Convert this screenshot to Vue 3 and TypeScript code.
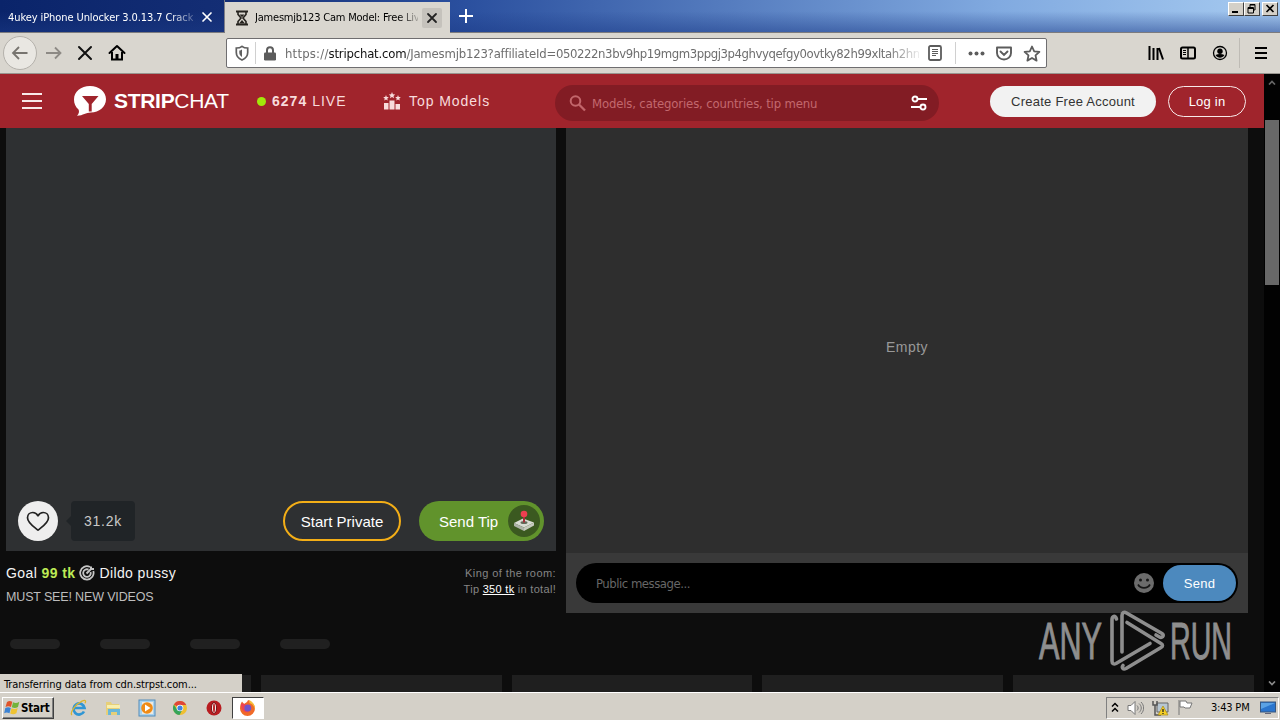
<script setup lang="ts">
const skeletonTabs = [0, 1, 2, 3]
const cards = [0, 1, 2, 3, 4]
</script>

<template>
  <div class="screen">
    <header class="tabs">
      <div class="tab idle">
        <span class="tab-title fade-blue">4ukey iPhone Unlocker 3.0.13.7 Crack</span>
        <svg class="tab-x" width="18" height="18" viewBox="0 0 18 18"><path d="M5 5l8 8M13 5l-8 8" stroke="#fff" stroke-width="1.7" stroke-linecap="round" /></svg>
      </div>
      <div class="tab active">
        <svg class="hourglass" width="14" height="16" viewBox="0 0 14 16" fill="none" stroke="#26231f">
          <path d="M1 1.5h12M1 14.5h12" stroke-width="2" />
          <path d="M3 2v2.500L6 8l-3 3.500V14M11 2v2.500L8 8l3 3.500V14" stroke-width="1.6" />
          <path d="M4.500 4.500h5L7 7.200zM4 13.500l3-3.500 3 3.500z" fill="#26231f" stroke="none" />
        </svg>
        <span class="tab-title fade-gray">Jamesmjb123 Cam Model: Free Liv</span>
        <svg class="tab-x boxed" width="20" height="20" viewBox="0 0 20 20"><path d="M6 6l8 8M14 6l-8 8" stroke="#222" stroke-width="1.8" stroke-linecap="round" /></svg>
      </div>
      <svg class="plus" width="16" height="16" viewBox="0 0 16 16"><path d="M8 1v14M1 8h14" stroke="#fff" stroke-width="2" /></svg>
      <div class="window-buttons">
        <i><svg width="14" height="12" viewBox="0 0 14 12"><path d="M3 9h6" stroke="#000" stroke-width="2" /></svg></i>
        <i><svg width="14" height="12" viewBox="0 0 14 12" fill="none" stroke="#000"><path d="M5 4V1.500h5V7H8.500M5 2h5" /><path d="M3 4.500h5.500V10H3zM3 5.500h5" /></svg></i>
        <i class="closer"><svg width="14" height="12" viewBox="0 0 14 12"><path d="M3.500 2l7 7M10.500 2l-7 7" stroke="#000" stroke-width="1.700" /></svg></i>
      </div>
    </header>

    <nav class="toolbar">
      <span class="back"><svg width="20" height="20" viewBox="0 0 20 20" fill="none" stroke="#77746f" stroke-width="1.800"><path d="M17.500 10H3M9 4l-6 6 6 6" /></svg></span>
      <svg class="forward" width="18" height="18" viewBox="0 0 18 18" fill="none" stroke="#8d8a85" stroke-width="1.800"><path d="M1 9h14M10 3.500l5.500 5.500-5.500 5.500" /></svg>
      <svg class="stop" width="16" height="16" viewBox="0 0 16 16"><path d="M2 2l12 12M14 2L2 14" stroke="#111" stroke-width="2" stroke-linecap="round" /></svg>
      <svg class="home" width="18" height="18" viewBox="0 0 18 18" fill="none" stroke="#000" stroke-width="2"><path d="M1.500 9L9 2l7.500 7" stroke-linecap="round" stroke-linejoin="round" /><path d="M4 8v7.500h10V8" /><path d="M9 15v-5" stroke-width="3" /></svg>
      <div class="address">
        <svg width="14" height="16" viewBox="0 0 14 16" fill="none"><path d="M1.300 3C4 3 5.500 2.500 7 1.300 8.500 2.500 10 3 12.700 3v4.500c0 3.500-2 6-5.700 7.500-3.700-1.500-5.700-4-5.700-7.500z" stroke="#5f5f5f" stroke-width="1.700" /><path d="M7 4.500v7.500c-1.800-1.200-2.700-2.500-2.700-4.500V5.500C5.500 5.500 6.300 5 7 4.500z" fill="#5f5f5f" /></svg>
        <i class="divider"></i>
        <svg width="12" height="15" viewBox="0 0 12 15"><path d="M3 7V4.200a3 3 0 016 0V7" fill="none" stroke="#5c5c5c" stroke-width="2" /><rect y="6.500" width="12" height="8" rx="1.200" fill="#5c5c5c" /></svg>
        <span class="url"><span class="scheme">https://</span><b>stripchat.com</b>/Jamesmjb123?affiliateId=<span class="token">050222n3bv9hp19mgm3ppgj3p4ghvyqefgy0ovtky82h99xltah2hn</span></span>
        <svg class="reader" width="14" height="16" viewBox="0 0 14 16" fill="none" stroke="#5c5c5c"><rect x="1" y="1" width="12" height="14" rx="1.500" stroke-width="1.800" /><path d="M4 4.500h6M4 6.500h6M4 8.500h6M4 10.500h4" /></svg>
        <i class="divider second"></i>
        <svg class="dots" width="17" height="5" viewBox="0 0 17 5" fill="#5c5c5c"><circle cx="2.500" cy="2.500" r="2" /><circle cx="8.500" cy="2.500" r="2" /><circle cx="14.500" cy="2.500" r="2" /></svg>
        <svg class="pocket" width="16" height="15" viewBox="0 0 16 15" fill="none" stroke="#5c5c5c" stroke-width="1.900"><path d="M1 1.500h14V7A7 6.500 0 011 7z" stroke-linejoin="round" /><path d="M4.500 5.500L8 9l3.500-3.500" stroke-linecap="round" /></svg>
        <svg class="star" width="18" height="17" viewBox="0 0 18 17" fill="none" stroke="#5c5c5c" stroke-width="1.800" stroke-linejoin="round"><path d="M9 1.500l2.200 4.800 5.200.6-3.900 3.500 1.100 5.200L9 13l-4.600 2.600 1.100-5.200-3.900-3.500 5.200-.6z" /></svg>
      </div>
      <div class="tools">
        <svg width="16" height="14" viewBox="0 0 16 14" stroke="#000" stroke-width="2"><path d="M1.500 0v14M5.500 2v12M9.500 2v12M11 2l4 11.500" /></svg>
        <svg width="16" height="14" viewBox="0 0 16 14" fill="none" stroke="#000"><rect x="1" y="1.500" width="14" height="11" rx="1.500" stroke-width="2" /><path d="M8 2v10" stroke-width="1.500" /><path d="M3 4.500h3M3 6.500h3M3 8.500h3" /></svg>
        <svg width="16" height="16" viewBox="0 0 16 16"><circle cx="8" cy="8" r="6.500" fill="none" stroke="#000" stroke-width="1.300" /><circle cx="8" cy="6.200" r="2.700" /><path d="M3.500 10c2.500-1.500 6.500-1.500 9 0-2.200 3.500-6.800 3.500-9 0z" /></svg>
        <i class="divider tall"></i>
        <svg width="14" height="14" viewBox="0 0 14 14" stroke="#000" stroke-width="2"><path d="M1 2h12M1 7h12M1 12h12" /></svg>
      </div>
    </nav>

    <div class="viewport">
      <main class="site">
        <header class="site-header">
          <svg class="burger" width="20" height="17" viewBox="0 0 20 17" stroke="#f8eaea" stroke-width="2"><path d="M0 1h20M0 8h20M0 15h20" /></svg>
          <svg class="bubble" width="34" height="32" viewBox="0 0 34 32"><path d="M17 1C26 1 33 6.500 33 14.200S26 27.500 18 27.500C12.500 27.500 10.500 30.500 4 30.800c2-2 2.500-4.500 1.500-6.300C2.500 22 1 18.500 1 14.500 1 6.500 8 1 17 1z" fill="#fff" /><path d="M9 11h16.500l-6.800 8v7.500h-2.900V19z" fill="#a0242c" /></svg>
          <span class="brand"><b>STRIP</b>CHAT</span>
          <i class="live-dot"></i>
          <span class="live"><b>6274</b> LIVE</span>
          <svg class="podium" width="18" height="18" viewBox="0 0 18 18" fill="#f8dcdc"><path d="M1 11h4.500v6.500H1zM6.500 8.500h5v9h-5zM12.500 12H17v5.500h-4.500z" /><path d="M9 0l.9 2.200 2.300.2-1.700 1.500.5 2.300L9 5 7 6.200l.5-2.300-1.700-1.500 2.300-.2zM3 3l.8 1.900 2 .2-1.500 1.300.4 2L3 7.400 1.300 8.400l.4-2L.2 5.100l2-.2zM15 3l.8 1.900 2 .2-1.500 1.300.4 2-1.700-1-1.700 1 .4-2-1.500-1.300 2-.2z" /></svg>
          <span class="top-models">Top Models</span>
          <div class="search">
            <svg width="17" height="17" viewBox="0 0 17 17" fill="none" stroke="#c2666b" stroke-width="2"><circle cx="6.500" cy="6" r="4.800" /><path d="M10 9.500l6 6" stroke-width="2.300" /></svg>
            <span>Models, categories, countries, tip menu</span>
            <svg class="filter" width="16" height="16" viewBox="0 0 16 16" fill="none" stroke="#fff" stroke-width="1.900"><circle cx="4" cy="4" r="2.500" /><path d="M7 4h9M0 12h9" /><circle cx="12" cy="12" r="2.500" /></svg>
          </div>
          <button class="create">Create Free Account</button>
          <button class="login">Log in</button>
        </header>

        <section class="room">
          <div class="left">
            <div class="video">
              <span class="like"><svg width="24" height="21" viewBox="0 0 24 21" fill="none" stroke="#222" stroke-width="1.700" stroke-linejoin="round"><path d="M12 19.200C8 16 1.500 12 1.500 6.800 1.500 3.500 4 1.500 6.800 1.500c2.200 0 4 1.200 5.200 3.300 1.200-2.100 3-3.300 5.200-3.300 2.800 0 5.300 2 5.300 5.300C22.500 12 16 16 12 19.200z" /></svg></span>
              <span class="likes">31.2k</span>
              <button class="private">Start Private</button>
              <button class="tip">
                <span>Send Tip</span>
                <i><svg width="22" height="22" viewBox="0 0 22 22"><path d="M1 13l9-4.500 11 4-10 5z" fill="#d9dcd4" /><path d="M1 13v3l10 5v-3.500z" fill="#aeb3a8" /><path d="M21 12.500v3L11 21v-3.500z" fill="#c6cabf" /><ellipse cx="11" cy="12.500" rx="3.500" ry="1.600" fill="#626c5b" /><path d="M11 5v7.500" stroke="#a6303b" stroke-width="2" /><circle cx="11" cy="4" r="3.300" fill="#ee3f50" /></svg></i>
              </button>
            </div>
            <div class="info">
              <div class="goal">
                <p class="goal-line">Goal <b>99 tk</b><svg width="16" height="16" viewBox="0 0 16 16" fill="none" stroke="#c6c6c6" stroke-width="1.800"><path d="M11 2A6.700 6.700 0 1014.300 6" /><path d="M9.500 4.600A3.800 3.800 0 1011.600 7" /><path d="M7.500 8.500l5-5M12 4V1.500M12 4h3" stroke-width="2" /></svg>Dildo pussy</p>
                <p class="topic">MUST SEE! NEW VIDEOS</p>
              </div>
              <div class="king"><p>King of the room:</p><p class="king-tip">Tip <u>350 tk</u> in total!</p></div>
            </div>
          </div>
          <div class="chat">
            <div class="messages">Empty</div>
            <div class="composer">
              <div class="message-box">
                <span>Public message...</span>
                <svg width="20" height="20" viewBox="0 0 20 20"><circle cx="10" cy="10" r="10" fill="#6c6c6c" /><circle cx="6.500" cy="7" r="1.500" fill="#171717" /><circle cx="13.500" cy="7" r="1.500" fill="#171717" /><path d="M4 11.500c2.500 4.500 9.500 4.500 12 0" fill="none" stroke="#171717" stroke-width="1.700" /></svg>
                <button>Send</button>
              </div>
            </div>
          </div>
        </section>
        <div class="skeletons"><i v-for="n in skeletonTabs" :key="n"></i></div>
        <div class="cards"><i v-for="n in cards" :key="n"></i></div>
      </main>
      <aside class="scrollbar">
        <svg width="8" height="5" viewBox="0 0 8 5"><path d="M1 4.500L4 1.500l3 3" fill="none" stroke="#666" stroke-width="1.700" /></svg>
        <i></i>
        <svg class="down" width="8" height="5" viewBox="0 0 8 5"><path d="M1 .5L4 3.500l3-3" fill="none" stroke="#888" stroke-width="1.700" /></svg>
      </aside>
      <div class="status">Transferring data from cdn.strpst.com...</div>
      <svg class="watermark" width="200" height="64" viewBox="0 0 200 64">
        <text x="1" y="50" textLength="63" lengthAdjust="spacingAndGlyphs">ANY</text>
        <g fill="none" stroke="#8e8e8e" stroke-width="3.600" stroke-linejoin="round" stroke-linecap="round">
          <path d="M78.500 10c-1.500-4-4.500-3-4.500 1v41c0 3 2 3.500 4 2.500l34-20" />
          <path d="M84 43V6.500c0-3 2-4 4.500-2.500L124 24.500c3 2 0 5-3 3.200L118 26" />
          <path d="M89 13.500L123 34.500c2 1.200 2 2.800 0 4L88 59.500c-3 1.500-4.500-1-3-3" />
        </g>
        <text x="132" y="50" textLength="62" lengthAdjust="spacingAndGlyphs">RUN</text>
      </svg>
    </div>

    <footer class="taskbar">
      <div class="start">
        <svg width="16" height="16" viewBox="0 0 16 16"><path d="M3 2c2-1.500 3.500-1.200 5.300-.2L7 7C5 6 3.500 6 1.500 7z" fill="#df542b" /><path d="M9 2.200c2 1 4 1 6.300-.5L14 7c-2 1.200-4 1.200-6.200.3z" fill="#73b33b" /><path d="M1.300 8c2-1 3.700-1 5.500 0l-1.300 5.200c-2-1-3.500-1-5.300 0z" fill="#3c83d4" /><path d="M7.500 8.300c2.200 1 4 1 6.200-.2l-1.300 5.200c-2.200 1.200-4 1.200-6.200.2z" fill="#efc332" /></svg>
        <b>Start</b>
      </div>
      <div class="launchers">
        <span><svg width="18" height="18" viewBox="0 0 18 18" fill="none"><path d="M14 12.500a5.500 5.500 0 11.500-3.500H4" stroke="#3096d4" stroke-width="2.700" /><path d="M2 16C-.5 14 5 5.500 12 2.200c4-1.800 4 .2 3 2" stroke="#dcb52e" stroke-width="1.300" /></svg></span>
        <span><svg width="18" height="18" viewBox="0 0 18 18"><path d="M2 3h5l1 2h7v11H2z" fill="#e6cf79" /><path d="M3 6h13v3H3z" fill="#f8efae" /><path d="M4 10h12v6h-3v-3H7v3H4z" fill="#69b7d9" /></svg></span>
        <span><svg width="18" height="18" viewBox="0 0 18 18"><rect x="1" y="1" width="16" height="16" fill="#a8d2ee" stroke="#528bba" /><rect x="4" y="3" width="11" height="12" fill="#eee9df" /><circle cx="9" cy="9" r="5.800" fill="#f08b16" /><path d="M7 5.500v7L12.500 9z" fill="#fff" /></svg></span>
        <span><svg width="16" height="16" viewBox="0 0 16 16"><circle cx="8" cy="8" r="7" fill="#efbf32" /><path d="M8 8L1.900 4.500A7 7 0 0114.200 5H8z" fill="#df4638" /><path d="M1.900 4.500A7 7 0 007.500 15l3-5.500L8 11 5 9.500z" fill="#35a45a" /><circle cx="8" cy="8" r="3.300" fill="#fff" /><circle cx="8" cy="8" r="2.600" fill="#4083df" /></svg></span>
        <span><svg width="16" height="16" viewBox="0 0 16 16"><circle cx="8" cy="8" r="7.500" fill="#b81c20" /><ellipse cx="8" cy="8" rx="2.600" ry="5.500" fill="#f7e9e7" stroke="#741114" /><ellipse cx="8" cy="8" rx="1" ry="4.800" fill="#bc2427" /></svg></span>
        <span class="current"><svg width="17" height="17" viewBox="0 0 17 17"><path d="M9 1c3 1 7 4 7 8.500a7.500 7.500 0 01-15 0C1 6 2 4 3 2.500L5 5c1-1 3-1 4-4z" fill="#f06a28" /><path d="M10 1c4 2 7 6 5.500 10 0-4-2-6-5-7z" fill="#f6c138" /><path d="M2 5c2-1 5 0 6 2L5 8c0 3 3 5 6 4-3 3-9 1-9-7z" fill="#ee4355" /><circle cx="8.800" cy="9" r="3.500" fill="#7254ca" /></svg></span>
      </div>
      <div class="tray">
        <svg width="8" height="11" viewBox="0 0 8 11" fill="none" stroke="#000" stroke-width="1.500"><path d="M1 4.500l3-3 3 3M1 9.500l3-3 3 3" /></svg>
        <svg width="17" height="16" viewBox="0 0 17 16" fill="#fff" stroke="#777"><path d="M1 5.500h3l4-4v13l-4-4H1z" /><path d="M10 5.500c1.500 1.500 1.500 3.500 0 5M12 3.500c3 2.500 3 6.500 0 9M14 2c3.500 3.500 3.500 8.500 0 12" fill="none" /></svg>
        <svg width="17" height="16" viewBox="0 0 17 16"><path d="M5 3h11v9H5z" fill="#b7c6d2" stroke="#666" /><path d="M1 1v4h4V1M3 5v10h6" fill="none" stroke="#555" stroke-width="1.500" /><path d="M11 6l5 9H6z" fill="#f5cf25" stroke="#a88a17" stroke-width=".7" /><path d="M11 9v3M11 13v1" stroke="#222" stroke-width="1.300" /></svg>
        <svg width="17" height="17" viewBox="0 0 17 17" fill="#fff" stroke="#777"><path d="M2 1v15M3 2h6l1 2h5l-2 5H8L7 8H3z" /></svg>
        <time>3:43 PM</time>
        <svg width="16" height="15" viewBox="0 0 16 15"><rect x=".5" y="2" width="15" height="10" fill="#2a75cd" stroke="#36567f" /><path d="M1 3h14L1 9z" fill="#5aa2e5" /><path d="M5 13h6v1H5z" fill="#667" /></svg>
      </div>
    </footer>
  </div>
</template>

<style>
html, body { overflow: hidden; background: #0d0d0d; }
</style>

<style scoped>
* { box-sizing: border-box; }
svg { display: block; flex: none; }
p { margin: 0; white-space: nowrap; }
button { padding: 0; border: 0; font: inherit; white-space: nowrap; }
.screen { width: 1280px; height: 720px; display: flex; flex-direction: column; overflow: hidden; font-family: "DejaVu Sans Condensed", "DejaVu Sans", sans-serif; font-size: 11px; font-stretch: condensed; }

.tabs { height: 33px; flex: none; display: flex; background: linear-gradient(180deg, transparent 35%, #1c3b8780), linear-gradient(90deg, #0a246a, #142e75 18%, #2a4f9e 36%, #81aae0 78%, #a6caf0); border-bottom: 1px solid #7c7b7e; }
.tab { display: flex; align-items: center; width: 225px; height: 33px; border-right: 1px solid #7e7f88; }
.idle { padding: 0 8px; color: #fff; height: 32px; padding-top: 2px; }
.tab-title { width: 185px; overflow: hidden; white-space: nowrap; letter-spacing: -0.08px; }
.fade-blue { -webkit-mask-image: linear-gradient(90deg, #000 88%, #0004); mask-image: linear-gradient(90deg, #000 88%, #0004); }
.tab-x { margin-left: 5px; }
.active { margin-top: 2px; height: 31px; padding-left: 10px; background: #d9d6cf; border-right: 0; }
.hourglass { margin-right: 6px; }
.fade-gray { width: 163px; letter-spacing: -.2px; -webkit-mask-image: linear-gradient(90deg, #000 88%, #0003); mask-image: linear-gradient(90deg, #000 88%, #0003); }
.boxed { margin-left: 4px; background: #c5c2bc; border-radius: 2px; }
.plus { margin: 8px 0 0 8px; }
.window-buttons { margin-left: auto; display: flex; padding: 2px 2px 0 0; }
.window-buttons i { width: 16px; height: 14px; background: #d4d0c8; border: 1px solid; border-color: #fff #404040 #404040 #fff; }
.window-buttons .closer { margin-left: 2px; }

.toolbar { height: 41px; flex: none; display: flex; align-items: center; background: #d9d6cf; border-bottom: 1px solid #98958f; padding-left: 3px; }
.back { width: 34px; height: 34px; border: 1px solid #b4b1ab; border-radius: 50%; background: #e9e7e2; display: grid; place-items: center; }
.forward { margin-left: 8px; }
.stop { margin-left: 14px; }
.home { margin-left: 15px; }
.address { flex: none; width: 821px; height: 30px; margin-left: 100px; padding-left: 8px; display: flex; align-items: center; background: #fff; border: 1px solid #6f6e70; border-radius: 2px; }
.divider { flex: none; width: 1px; height: 22px; background: #d0d0d0; margin: 0 8px 0 6px; }
.url { flex: none; width: 634px; margin-left: 9px; overflow: hidden; white-space: nowrap; font-size: 13px; color: #6e6e6e; letter-spacing: -.2px; -webkit-mask-image: linear-gradient(90deg, #000 95%, #0002); mask-image: linear-gradient(90deg, #000 95%, #0002); }
.scheme { letter-spacing: .2px; }
.token { letter-spacing: -.42px; }
.url b { color: #111; font-weight: 400; }
.reader { margin-left: 9px; }
.second { margin: 0 12px 0 13px; }
.pocket { margin-left: 11px; }
.star { margin-left: 11px; }
.tools { display: flex; align-items: center; margin-left: 101px; }
.tools svg { margin-right: 16px; }
.tools svg:last-child { margin-right: 0; }
.tools .tall { height: 30px; background: #bebbb5; margin: 0 14px 0 -5px; }

.viewport { position: relative; height: 618px; display: flex; flex: none; background: #0d0d0d; overflow: hidden; font-family: "Liberation Sans", Arial, sans-serif; font-stretch: normal; }
.site { width: 1264px; height: 618px; overflow: hidden; }
.site-header { height: 54px; display: flex; align-items: center; background: #a0242c; color: #f8dcdc; padding-left: 22px; }
.bubble { margin-left: 31px; }
.brand { width: 116px; margin-left: 7px; color: #fff; font-size: 21px; letter-spacing: -.3px; white-space: nowrap; }
.live-dot { width: 9px; height: 9px; border-radius: 50%; background: #a2e80a; margin-left: 27px; }
.live { width: 76px; margin-left: 6px; font-size: 14px; letter-spacing: 1.02px; white-space: nowrap; }
.podium { margin-left: 35px; }
.top-models { width: 82px; margin-left: 8px; font-size: 14px; letter-spacing: .95px; white-space: nowrap; }
.search { width: 384px; height: 36px; margin: 4px 0 0 64px; border-radius: 18px; padding: 0 12px 0 14px; display: flex; align-items: center; background: #821c24; }
.search span { margin-left: 6px; color: #c2686e; font: 13px "DejaVu Sans Condensed", "DejaVu Sans", sans-serif; letter-spacing: -.16px; white-space: nowrap; }
.filter { margin-left: auto; }
.create { width: 166px; height: 31px; margin-left: 51px; border-radius: 16px; background: #f2f2f2; color: #333; font-size: 13px; letter-spacing: .25px; }
.login { width: 78px; height: 31px; margin-left: 12px; border: 1px solid #f8e9e9; border-radius: 16px; background: transparent; color: #fff; font-size: 13px; letter-spacing: .2px; }

.room { display: flex; gap: 10px; padding-left: 6px; }
.left { width: 550px; }
.video { height: 423px; padding: 0 12px 10px; display: flex; align-items: flex-end; background: #2e3032; }
.like { width: 40px; height: 40px; border-radius: 50%; background: #eee; display: grid; place-items: center; }
.likes { position: relative; width: 64px; height: 40px; line-height: 40px; margin-left: 13px; padding-left: 13px; border-radius: 4px; background: #202427; color: #c9c9c9; font-size: 14px; letter-spacing: .75px; }
.likes::before { content: ""; position: absolute; left: -5px; top: 15px; border: 5px solid transparent; border-left: 0; border-right-color: #202427; }
.private { width: 118px; height: 40px; margin-left: auto; border: 2px solid #f3ae17; border-radius: 20px; background: transparent; color: #fff; font-size: 15px; }
.tip { width: 125px; height: 40px; margin-left: 18px; padding: 0 4px 0 20px; border-radius: 20px; background: #61932c; color: #fff; font-size: 15px; display: flex; align-items: center; justify-content: space-between; }
.tip i { width: 32px; height: 32px; border-radius: 50%; background: #3b5920; display: grid; place-items: center; }
.info { height: 88px; display: flex; justify-content: space-between; }
.goal { color: #f4f4f4; font-size: 14px; letter-spacing: .4px; }
.goal-line { display: flex; align-items: center; height: 18px; margin-top: 13px; white-space: pre; }
.goal-line b { color: #bcea55; }
.goal-line svg { margin: 0 4px 0 4px; }
.topic { margin-top: 8px; font-size: 12.5px; line-height: 14px; color: #bdbdbd; letter-spacing: -.15px; }
.king { margin-top: 14px; text-align: right; font-size: 11px; line-height: 16px; color: #858585; letter-spacing: .42px; }
.king-tip { letter-spacing: .3px; }
.king u { color: #fff; }
.chat { width: 682px; }
.messages { height: 425px; padding-top: 12px; display: grid; place-items: center; background: #2e2e2e; color: #999; font-size: 14px; letter-spacing: .45px; }
.composer { height: 60px; padding: 10px; background: #393939; }
.message-box { height: 40px; border-radius: 20px; background: #000; display: flex; align-items: center; padding: 0 2px 0 20px; }
.message-box span { flex: 1; color: #676767; font: 13px "DejaVu Sans Condensed", "DejaVu Sans", sans-serif; letter-spacing: -.48px; }
.message-box button { width: 73px; height: 36px; margin-left: 9px; border-radius: 18px; background: #4c89be; color: #fff; font-size: 13px; letter-spacing: .3px; }
.skeletons { display: flex; gap: 40px; padding-left: 10px; height: 36px; }
.skeletons i { width: 50px; height: 10px; border-radius: 5px; background: #202020; }
.cards { display: flex; gap: 10px; padding-left: 10px; }
.cards i { width: 240.800px; height: 17px; flex: none; background: #1f1f1f; }
.scrollbar { width: 16px; background: #020202; display: flex; flex-direction: column; align-items: center; padding: 6px 0; }
.scrollbar i { width: 14px; height: 165px; margin-top: 35px; background: #686868; }
.down { margin-top: auto; }
.status { position: absolute; left: 0; bottom: 0; width: 242px; height: 18px; padding-left: 4px; background: #d4d0c8; color: #000; font: 11px/21px "DejaVu Sans Condensed", "DejaVu Sans", sans-serif; letter-spacing: -.1px; white-space: nowrap; }
.watermark { position: absolute; left: 1038px; top: 535px; }
.watermark text { font: 52px "Liberation Sans", sans-serif; fill: #8e8e8e; stroke: #8e8e8e; stroke-width: 1px; }

.taskbar { height: 28px; flex: none; display: flex; align-items: center; padding: 2px 1px 0 2px; background: #d4d0c8; border-top: 1px solid #fff; }
.start { width: 52px; height: 22px; padding-left: 1px; display: flex; align-items: center; gap: 1px; border: 1px solid; border-color: #fff #404040 #404040 #fff; box-shadow: inset -1px -1px #808080; }
.start b { font-size: 11.500px; letter-spacing: -.2px; }
.launchers { display: flex; margin-left: 9px; }
.launchers span { width: 32px; height: 22px; margin-right: 1.800px; display: grid; place-items: center; }
.launchers .current { background: #fff; border: 1px solid; border-color: #404040 #fff #fff #404040; }
.tray { width: 173px; height: 22px; margin-left: auto; padding: 0 1px 0 4px; display: flex; align-items: center; border: 1px solid; border-color: #808080 #fff #fff #808080; }
.tray svg { margin-right: 8px; }
.tray time { width: 42px; margin: 0 7px 0 9px; white-space: nowrap; letter-spacing: -.2px; }
.tray time + svg { margin: 0; }
</style>
